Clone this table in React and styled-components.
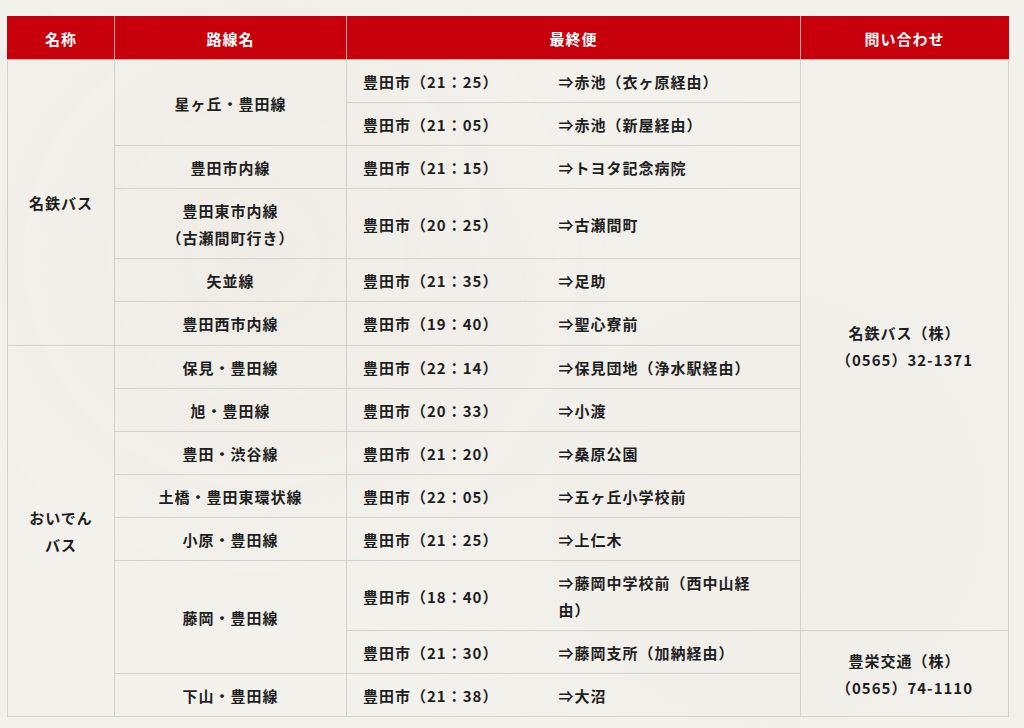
import React from "react";
import styled, { createGlobalStyle } from "styled-components";

const GlobalStyle = createGlobalStyle`
  html, body {
    margin: 0;
    padding: 0;
    background-color: #f3f1ec;
    background-image:
      radial-gradient(circle at 25% 35%, rgba(230, 225, 213, 0.3) 0, transparent 40%),
      radial-gradient(circle at 75% 70%, rgba(232, 227, 216, 0.25) 0, transparent 45%);
  }
  body {
    font-family: "Noto Sans CJK JP", "Noto Sans", sans-serif;
    color: #1e1e1e;
  }
`;

const Page = styled.div`
  padding: 16px 16px 12px 7px;
`;

const Table = styled.table`
  width: 1001px;
  border-collapse: collapse;
  table-layout: fixed;
  font-size: 15px;
  letter-spacing: 1px;
  line-height: 27px;
  font-weight: 600;
`;

const HeadCell = styled.th`
  background: #c8000b;
  color: #fff;
  font-weight: 700;
  height: 42px;
  padding: 0 8px;
  text-align: center;
  border: 1px solid #e6a3a3;
  border-top-color: #c8000b;
  &:first-child {
    border-left-color: #c8000b;
  }
  &:last-child {
    border-right-color: #c8000b;
  }
`;

const Cell = styled.td`
  border: 1px solid #d3d1cc;
  padding: 8px 15px 7.1px;
  text-align: center;
  vertical-align: middle;
`;

const TimeCell = styled(Cell)`
  text-align: left;
  padding: 8px 16px 7.1px;
  border-right: none;
  white-space: nowrap;
  border-top-color: ${(p) => (p.$sub ? "#dddbd6" : "#d3d1cc")};
`;

const DestCell = styled(Cell)`
  text-align: left;
  padding: 8px 42px 7.1px 16px;
  border-left: none;
  border-top-color: ${(p) => (p.$sub ? "#dddbd6" : "#d3d1cc")};
`;

const rows = [
  { name: ["名鉄バス", 6], route: ["星ヶ丘・豊田線", 2], time: "21：25", dest: "⇒赤池（衣ヶ原経由）", contact: [["名鉄バス（株）", "（0565）32-1371"], 12] },
  { time: "21：05", dest: "⇒赤池（新屋経由）", sub: true },
  { route: ["豊田市内線", 1], time: "21：15", dest: "⇒トヨタ記念病院" },
  { route: [["豊田東市内線", "（古瀬間町行き）"], 1], time: "20：25", dest: "⇒古瀬間町" },
  { route: ["矢並線", 1], time: "21：35", dest: "⇒足助" },
  { route: ["豊田西市内線", 1], time: "19：40", dest: "⇒聖心寮前" },
  { name: ["おいでんバス", 8], route: ["保見・豊田線", 1], time: "22：14", dest: "⇒保見団地（浄水駅経由）" },
  { route: ["旭・豊田線", 1], time: "20：33", dest: "⇒小渡" },
  { route: ["豊田・渋谷線", 1], time: "21：20", dest: "⇒桑原公園" },
  { route: ["土橋・豊田東環状線", 1], time: "22：05", dest: "⇒五ヶ丘小学校前" },
  { route: ["小原・豊田線", 1], time: "21：25", dest: "⇒上仁木" },
  { route: ["藤岡・豊田線", 2], time: "18：40", dest: "⇒藤岡中学校前（西中山経由）" },
  { time: "21：30", dest: "⇒藤岡支所（加納経由）", sub: true, contact: [["豊栄交通（株）", "（0565）74-1110"], 2] },
  { route: ["下山・豊田線", 1], time: "21：38", dest: "⇒大沼" },
];

const Lines = ({ text }) =>
  Array.isArray(text)
    ? text.map((t, i) => (
        <React.Fragment key={i}>
          {i > 0 && <br />}
          {t}
        </React.Fragment>
      ))
    : text;

const App = () => {
  return (
    <Page>
      <GlobalStyle />
      <Table>
        <colgroup>
          <col style={{ width: 107 }} />
          <col style={{ width: 232 }} />
          <col style={{ width: 196 }} />
          <col style={{ width: 258 }} />
          <col style={{ width: 208 }} />
        </colgroup>
        <thead>
          <tr>
            <HeadCell>名称</HeadCell>
            <HeadCell>路線名</HeadCell>
            <HeadCell colSpan={2}>最終便</HeadCell>
            <HeadCell>問い合わせ</HeadCell>
          </tr>
        </thead>
        <tbody>
          {rows.map((r, i) => (
            <tr key={i}>
              {r.name && (
                <Cell rowSpan={r.name[1]}>
                  <Lines text={r.name[0]} />
                </Cell>
              )}
              {r.route && (
                <Cell rowSpan={r.route[1]}>
                  <Lines text={r.route[0]} />
                </Cell>
              )}
              <TimeCell $sub={r.sub}>豊田市（{r.time}）</TimeCell>
              <DestCell $sub={r.sub}>{r.dest}</DestCell>
              {r.contact && (
                <Cell rowSpan={r.contact[1]}>
                  <Lines text={r.contact[0]} />
                </Cell>
              )}
            </tr>
          ))}
        </tbody>
      </Table>
    </Page>
  );
};

export default App;
